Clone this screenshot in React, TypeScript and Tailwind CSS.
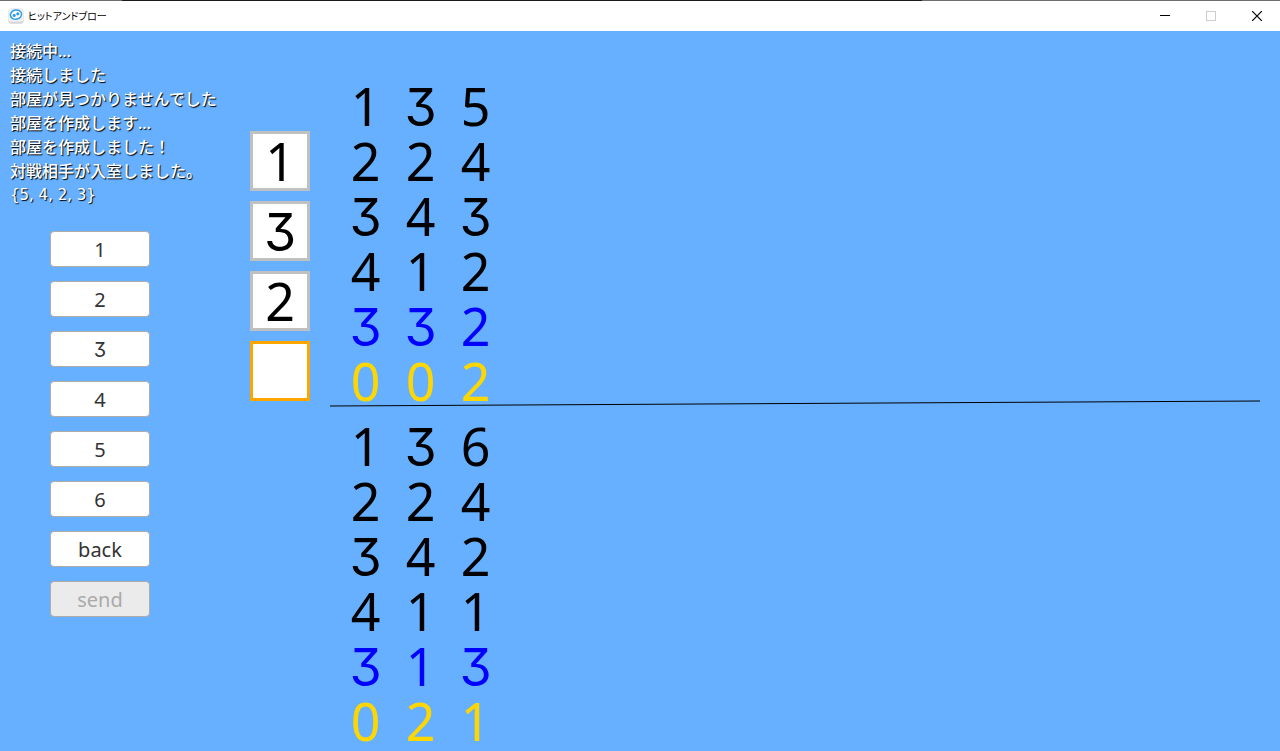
type Tone = 'black' | 'blue' | 'gold';

const tones: Record<Tone, string> = {
  black: 'text-black',
  blue: 'text-[#0000ff]',
  gold: 'text-[#ffd700]',
};

const messages = [
  '接続中...',
  '接続しました',
  '部屋が見つかりませんでした',
  '部屋を作成します...',
  '部屋を作成しました！',
  '対戦相手が入室しました。',
];
const answer = '{5, 4, 2, 3}';

const keys = ['1', '2', '3', '4', '5', '6', 'back', 'send'];
const guess = ['1', '3', '2', ''];
const rowTones: Tone[] = ['black', 'black', 'black', 'black', 'blue', 'gold'];

const ownHistory = ['135', '224', '343', '412', '332', '002'];
const rivalHistory = ['136', '224', '342', '411', '313', '021'];

function Label({ value }: { value: string }) {
  // Inter's alternate three has the flat top
  return (
    <span className="block leading-none">
      {value === '3' ? (
        <span className="font-[Inter,sans-serif] leading-[0] [font-feature-settings:'cv09']">3</span>
      ) : (
        value
      )}
    </span>
  );
}

function History({ rows, label }: { rows: string[]; label: string }) {
  return (
    <table aria-label={label} className="ml-2 w-[165px] table-fixed border-collapse">
      <tbody>
        {rows.map((row, i) => (
          <tr key={i} className={tones[rowTones[i]]}>
            {row.split('').map((d, j) => (
              <td key={j} className="h-[55px] p-0 text-center align-middle text-[52px] leading-none">
                <Label value={d} />
              </td>
            ))}
          </tr>
        ))}
      </tbody>
    </table>
  );
}

function AppIcon() {
  return (
    <svg viewBox="0 0 16 16" className="size-4" aria-hidden="true">
      <rect x="0.3" y="0.5" width="15.4" height="15.2" rx="3" fill="#d3d6da" />
      <rect x="0.3" y="0.5" width="15.4" height="13.2" rx="3" fill="#eef0f2" />
      <ellipse cx="8" cy="6.6" rx="5.6" ry="4.6" fill="#fff" stroke="#2f9fe8" strokeWidth="1.5" transform="rotate(-12 8 6.6)" />
      <circle cx="6.2" cy="7.4" r="1.6" fill="#2f9fe8" />
      <circle cx="9.8" cy="5.8" r="1.6" fill="#2f9fe8" />
    </svg>
  );
}

function TitleBar() {
  return (
    <header className="bg-white">
      <div className="flex h-px">
        <div className="w-[122px] bg-[#6e6e6e]" />
        <div className="w-[800px] bg-[#1b1b1f]" />
        <div className="flex-1 bg-[#6e6e6e]" />
      </div>
      <div className="flex h-[30px] items-center pl-2">
        <AppIcon />
        <h1 className="ml-1 flex-1 font-['Noto_Sans_CJK_JP',sans-serif] text-[10px] leading-none text-black [font-feature-settings:'palt']">
          ヒットアンドブロー
        </h1>
        <button aria-label="Minimize" className="flex h-full w-[46px] items-center justify-center">
          <svg width="10" height="10" shapeRendering="crispEdges">
            <path d="M0 4.5H10" stroke="#000" />
          </svg>
        </button>
        <button aria-label="Maximize" disabled className="flex h-full w-[46px] items-center justify-center">
          <svg width="10" height="10" shapeRendering="crispEdges">
            <rect x="0.5" y="0.5" width="9" height="9" fill="none" stroke="#ccc" />
          </svg>
        </button>
        <button aria-label="Close" className="flex h-full w-[46px] items-center justify-center">
          <svg width="10" height="10">
            <path d="M0 0L10 10M10 0L0 10" stroke="#000" strokeWidth="1.2" />
          </svg>
        </button>
      </div>
    </header>
  );
}

export default function App() {
  return (
    <div className="flex min-h-screen flex-col bg-[#66b0ff] font-['Noto_Sans','Noto_Sans_CJK_JP',sans-serif]">
      <TitleBar />
      <main className="flex flex-1 items-start">
        <section className="w-[250px] pt-2">
          <ul className="pl-2.5 text-base leading-6 font-medium whitespace-nowrap text-white [text-shadow:1px_1px_1px_#000]">
            {messages.map((m) => (
              <li key={m} className="h-6">{m}</li>
            ))}
            <li className="h-6 font-['DejaVu_Sans',sans-serif] text-[15px] leading-6 font-normal">{answer}</li>
          </ul>
          <div className="mt-6 ml-[50px] flex w-[100px] flex-col gap-[14px]">
            {keys.map((k) => (
              <button
                key={k}
                disabled={k === 'send'}
                className="h-9 rounded border border-[#b0aca8] bg-white pt-0.5 text-center text-xl leading-none text-[#333] disabled:bg-[#ebebeb] disabled:text-[#aaa]"
              >
                <Label value={k} />
              </button>
            ))}
          </div>
        </section>
        <section aria-label="guess" className="flex flex-col gap-2.5 pt-[100px]">
          {guess.map((g, i) => (
            <div
              key={i}
              className={`flex size-[60px] items-center justify-center border-3 bg-white text-[52px] leading-none text-black ${
                g ? 'border-[#c0c0c0]' : 'border-[#ffa500]'
              }`}
            >
              <Label value={g} />
            </div>
          ))}
        </section>
        <section className="mr-5 ml-5 flex-1 pt-[47px]">
          <History rows={ownHistory} label="own guesses" />
          <svg className="-mt-2 mb-2 block h-2.5 w-full" aria-hidden="true">
            <line x1="0" y1="6" x2="100%" y2="1" stroke="#000" />
          </svg>
          <History rows={rivalHistory} label="rival guesses" />
        </section>
      </main>
    </div>
  );
}
